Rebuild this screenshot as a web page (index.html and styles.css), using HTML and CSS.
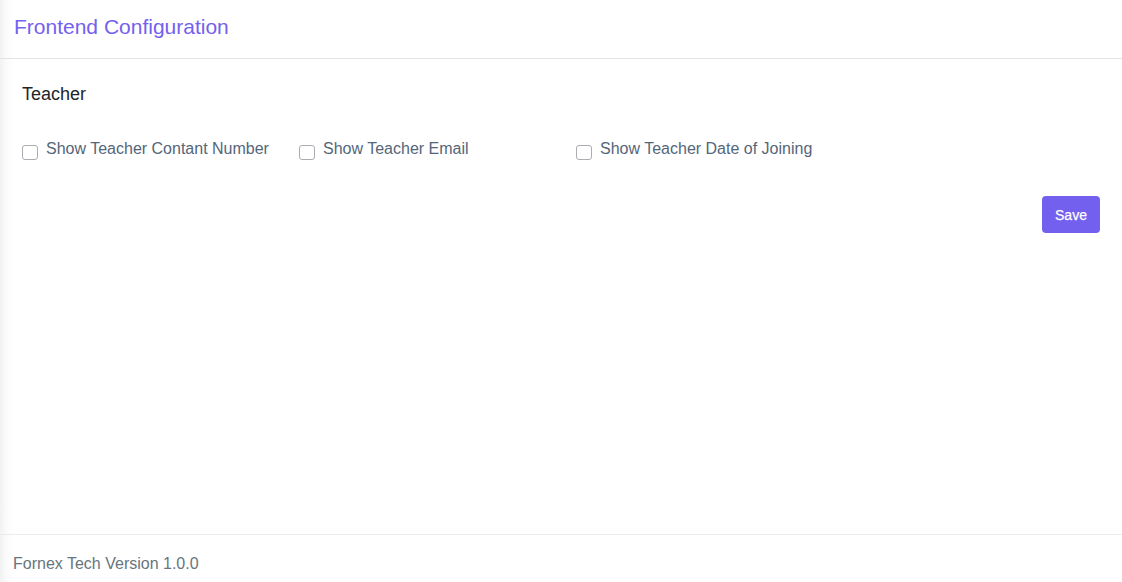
FILE: index.html
```html
<!DOCTYPE html>
<html>
<head>
<meta charset="utf-8">
<link rel="stylesheet" href="styles.css">
</head>
<body>
<div class="page">
  <header class="page-header">
    <h1 class="page-title">Frontend Configuration</h1>
  </header>
  <main class="content">
    <h2 class="section-title">Teacher</h2>
    <div class="options">
      <label class="option"><span class="box"></span><span class="option-text">Show Teacher Contant Number</span></label>
      <label class="option"><span class="box"></span><span class="option-text">Show Teacher Email</span></label>
      <label class="option"><span class="box"></span><span class="option-text">Show Teacher Date of Joining</span></label>
    </div>
    <div class="actions">
      <button class="btn-save">Save</button>
    </div>
  </main>
  <footer class="page-footer">Fornex Tech Version 1.0.0</footer>
</div>
</body>
</html>
```
FILE: styles.css
```css
* { box-sizing: border-box; }
html, body { margin: 0; padding: 0; height: 100%; }
body {
  font-family: "Liberation Sans", Arial, sans-serif;
  background: #fff;
}
.page {
  height: 582px;
  display: flex;
  flex-direction: column;
  background: linear-gradient(to right, #f2f2f2 0px, #fafafa 6px, #fff 14px);
}
.page-header {
  height: 59px;
  border-bottom: 1px solid #e3e3e3;
  padding: 0 14px;
  display: flex;
  align-items: center;
}
.page-title {
  margin: 0;
  font-size: 21px;
  font-weight: normal;
  color: #7460ee;
  position: relative;
  top: -2px;
}
.content {
  flex: 1;
  padding: 23px 22px 0 22px;
}
.section-title {
  margin: 0;
  font-size: 18px;
  font-weight: normal;
  color: #212529;
  line-height: 24px;
}
.options {
  display: grid;
  grid-template-columns: 277px 277px 277px;
  margin-top: 33px;
}
.option {
  display: flex;
  align-items: flex-start;
  gap: 8px;
  font-size: 16px;
  color: #54667a;
  line-height: 20px;
}
.box {
  width: 16px;
  height: 15px;
  border: 1px solid #a9acb0;
  border-radius: 3px;
  background: #fff;
  margin-top: 6px;
  flex: none;
}
.actions {
  display: flex;
  justify-content: flex-end;
  margin-top: 36px;
}
.btn-save {
  width: 58px;
  height: 37px;
  background: #7460ee;
  border: none;
  border-radius: 4px;
  color: #fff;
  font-family: "Liberation Sans", Arial, sans-serif;
  font-size: 14px;
  padding: 0;
  -webkit-text-stroke: 0.25px #fff;
}
.page-footer {
  height: 48px;
  border-top: 1px solid #ececec;
  padding: 0 13px;
  display: flex;
  align-items: center;
  font-size: 16px;
  color: #67757c;
  padding-top: 10px;
}
```
